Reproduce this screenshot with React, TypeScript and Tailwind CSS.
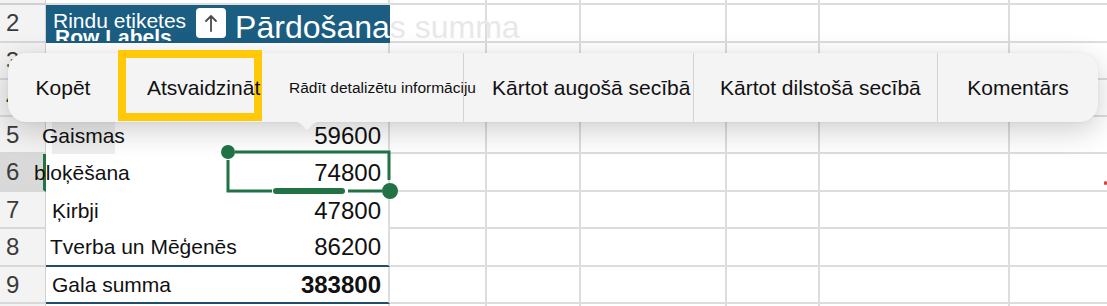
import React from "react";

// grid columns after B: C..G fixed, H fills the rest
function RestCells({ last }: { last?: boolean }) {
  const b = last ? "" : " border-b-2";
  return (
    <>
      <div className={"w-[97px] shrink-0 border-r-2 border-[#dddddd]" + b} />
      <div className={"w-[94px] shrink-0 border-r-2 border-[#dddddd]" + b} />
      <div className={"w-[146px] shrink-0 border-r-2 border-[#dddddd]" + b} />
      <div className={"w-[93px] shrink-0 border-r-2 border-[#dddddd]" + b} />
      <div className={"w-[190px] shrink-0 border-r-2 border-[#dddddd]" + b} />
      <div className={"flex-1 border-[#dddddd]" + b} />
    </>
  );
}

function RowHead({ n, selected }: { n: string; selected?: boolean }) {
  return (
    <div
      className={
        "w-[46px] shrink-0 flex items-center pl-[6px] text-[24px] leading-none border-b-2 border-[#d8d8d8] " +
        (selected
          ? "bg-[#d9d9d9] border-r-[3px] border-r-[#217346]"
          : "bg-[#f3f3f3] border-r border-r-[#d0d0d0]")
      }
    >
      <span className="text-[#3b3b3b]">{n}</span>
    </div>
  );
}

const menu = [
  { label: "Kopēt", cls: "w-[110px] justify-center" },
  { label: "Atsvaidzināt", cls: "relative z-10 w-[144px] pl-[29px]" },
  { label: "Rādīt detalizētu informāciju", cls: "w-[201px] pl-[27px] text-[15.5px]" },
  { label: "Kārtot augošā secībā", cls: "w-[230px] pl-[28px] border-l border-[#d3d3d3]" },
  { label: "Kārtot dilstošā secībā", cls: "w-[244px] pl-[26px] border-l border-[#d3d3d3]" },
  { label: "Komentārs", cls: "flex-1 justify-center border-l border-[#d3d3d3]" },
];

const data = [
  { n: "5", h: "h-[37px]", label: "Gaismas", lc: "ml-[-4px]", value: "59600" },
  { n: "6", h: "h-[38px]", label: "bloķēšana", lc: "ml-[-12px]", value: "74800", selected: true },
  { n: "7", h: "h-[37px]", label: "Ķirbji", lc: "ml-[6px]", value: "47800" },
  { n: "8", h: "h-[38px]", label: "Tverba un Mēģenēs", lc: "ml-[4px]", value: "86200", line: true },
  { n: "9", h: "h-[37px]", label: "Gala summa", lc: "ml-[6px]", value: "383800", line: true, bold: true },
];

export default function App() {
  return (
    <div className="relative w-[1107px] h-[306px] overflow-hidden bg-white font-['Liberation_Sans',Arial,sans-serif] text-[#111]">
      {/* row 1, only a sliver */}
      <div className="flex h-[5px]">
        <div className="w-[46px] shrink-0 bg-[#f3f3f3] border-r border-b-2 border-[#d0d0d0]" />
        <div className="w-[344px] shrink-0 border-r-2 border-b-2 border-[#dddddd]" />
        <RestCells />
      </div>

      {/* row 2: pivot header */}
      <div className="flex h-[38px]">
        <RowHead n="2" />
        <div className="w-[344px] shrink-0 bg-[#1b5e82] flex items-center border-b-2 border-[#1b5e82]">
          <div className="relative shrink-0 h-full overflow-hidden pl-[7px] flex items-center">
            <span className="absolute left-[9px] top-[21px] text-[21px] font-bold text-white leading-none whitespace-nowrap">
              Row Labels
            </span>
            <span className="relative -mt-[6px] text-[21px] text-white leading-none whitespace-nowrap [text-shadow:0_0_2px_#1b5e82,0_0_2px_#1b5e82]">
              Rindu etiketes
            </span>
          </div>
          <div className="ml-[10px] w-[30px] h-[30px] shrink-0 bg-white rounded-[4px] flex items-center justify-center">
            <svg width="14" height="20" viewBox="0 0 14 20" fill="none">
              <path d="M7 18V3M2 8l5-5 5 5" stroke="#4a4a4a" strokeWidth="1.8" strokeLinecap="round" strokeLinejoin="round" />
            </svg>
          </div>
          <span className="relative z-10 shrink-0 ml-[9px] mt-[8px] text-[32px] text-white leading-none whitespace-nowrap">
            Pārdošana<span className="text-[#e8e8e8]">s summa</span>
          </span>
        </div>
        <RestCells />
      </div>

      {/* rows 3 and 4, mostly under the menu */}
      <div className="flex h-[37px]">
        <RowHead n="3" />
        <div className="w-[344px] shrink-0 flex items-center justify-between pl-[6px] pr-[7px] border-r-2 border-[#dddddd] text-[21px] text-[#b8b8b8]">
          <span>Biļetes</span>
          <span className="text-[24px]">40400</span>
        </div>
        <RestCells />
      </div>
      <div className="flex h-[37px]">
        <RowHead n="4" />
        <div className="w-[344px] shrink-0 border-r-2 border-[#dddddd]" />
        <RestCells />
      </div>

      {/* rows 5 – 9: pivot body */}
      {data.map((r) => (
        <div key={r.n} className={"flex " + r.h}>
          <RowHead n={r.n} selected={r.selected} />
          <div
            className={
              "relative w-[344px] shrink-0 flex items-center justify-between pr-[7px] border-r-2 border-r-[#dddddd] " +
              (r.line ? "border-b-2 border-b-[#1f4d6b]" : "")
            }
          >
            {r.n === "5" && <div className="absolute left-[6px] top-0 w-[63px] h-full bg-[#eeeeee]" />}
            <span className={"relative text-[21px] whitespace-nowrap " + r.lc}>{r.label}</span>
            <span className={"relative text-[24px] " + (r.bold ? "font-bold" : "")}>{r.value}</span>
          </div>
          <RestCells />
        </div>
      ))}

      {/* row 10 sliver */}
      <div className="flex h-[10px]">
        <div className="w-[46px] shrink-0 bg-[#f3f3f3] border-r border-[#d0d0d0]" />
        <div className="w-[344px] shrink-0 border-r-2 border-[#dddddd]" />
        <RestCells last />
      </div>

      {/* selection outline and handles */}
      <svg className="absolute left-[218px] top-[142px]" width="184" height="60" viewBox="0 0 184 60" fill="none">
        <g stroke="#217346" strokeWidth="3">
          <path d="M17 10H171V38" />
          <path d="M10 18V49H54" />
          <path d="M130 49H164" />
          <path d="M58 49H124" strokeWidth="6" strokeLinecap="round" />
        </g>
        <circle cx="10" cy="10" r="7" fill="#217346" />
        <circle cx="172" cy="49" r="8" fill="#217346" />
      </svg>

      {/* context menu */}
      <div className="absolute left-[8px] top-[53px] w-[1090px] h-[69px] rounded-[18px] bg-[#f4f4f4] shadow-[0_8px_30px_rgba(0,0,0,0.2),0_0_3px_rgba(0,0,0,0.06)] flex text-[21px] text-[#111]">
        {menu.map((m) => (
          <div key={m.label} className={"h-full shrink-0 flex items-center whitespace-nowrap " + m.cls}>
            {m.label}
          </div>
        ))}
        <svg className="absolute left-[282px] top-[68px]" width="34" height="11" viewBox="0 0 34 11">
          <path d="M0 0Q10 0 14 6Q17 11 20 6Q24 0 34 0Z" fill="#f4f4f4" />
        </svg>
      </div>

      {/* focus ring on Atsvaidzināt, under its label */}
      <div className="absolute left-[118px] top-[50px] w-[144px] h-[71px] border-[8px] border-[#ffc907] pointer-events-none" />

      <div className="absolute left-[1104px] top-[181px] w-[3px] h-[4px] rounded-full bg-[#e23b3b]" />
    </div>
  );
}
